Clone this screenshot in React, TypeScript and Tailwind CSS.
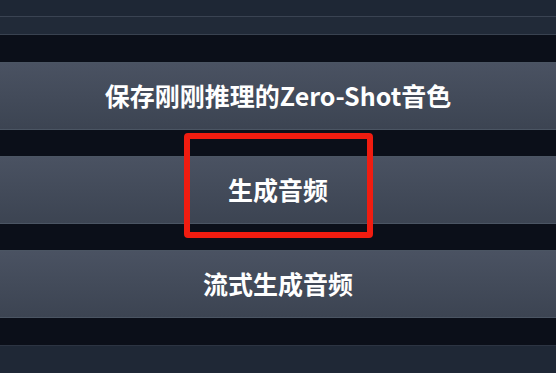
import React from "react";

const font = { fontFamily: '"Noto Sans CJK SC", "Noto Sans", sans-serif' };

function ActionButton({ label }: { label: string }) {
  return (
    <button
      className="h-[68px] w-full border-y border-[#4b5563] bg-gradient-to-b from-[#4a5262] to-[#3c4452] text-[25px] font-bold text-white"
      style={font}
    >
      {label}
    </button>
  );
}

export default function App() {
  return (
    <div className="relative flex h-[373px] w-[556px] flex-col overflow-hidden bg-[#0b0f19]" style={font}>
      <div className="h-[17px] border-b border-[#3a4352] bg-[#1e2735]" />
      <div className="h-[18px] border-b border-[#394250] bg-[#212a38]" />
      <div className="flex flex-1 flex-col gap-[26px] pt-[27px] pb-[26px]">
        <ActionButton label="保存刚刚推理的Zero-Shot音色" />
        <ActionButton label="生成音频" />
        <ActionButton label="流式生成音频" />
      </div>
      <div className="h-[28px] border-t border-[#2c3442] bg-[#1f2836]" />

      <div className="pointer-events-none absolute left-[184px] top-[133px] h-[105px] w-[189px] rounded-[4px] border-[6px] border-[#f01c10]" />
    </div>
  );
}
